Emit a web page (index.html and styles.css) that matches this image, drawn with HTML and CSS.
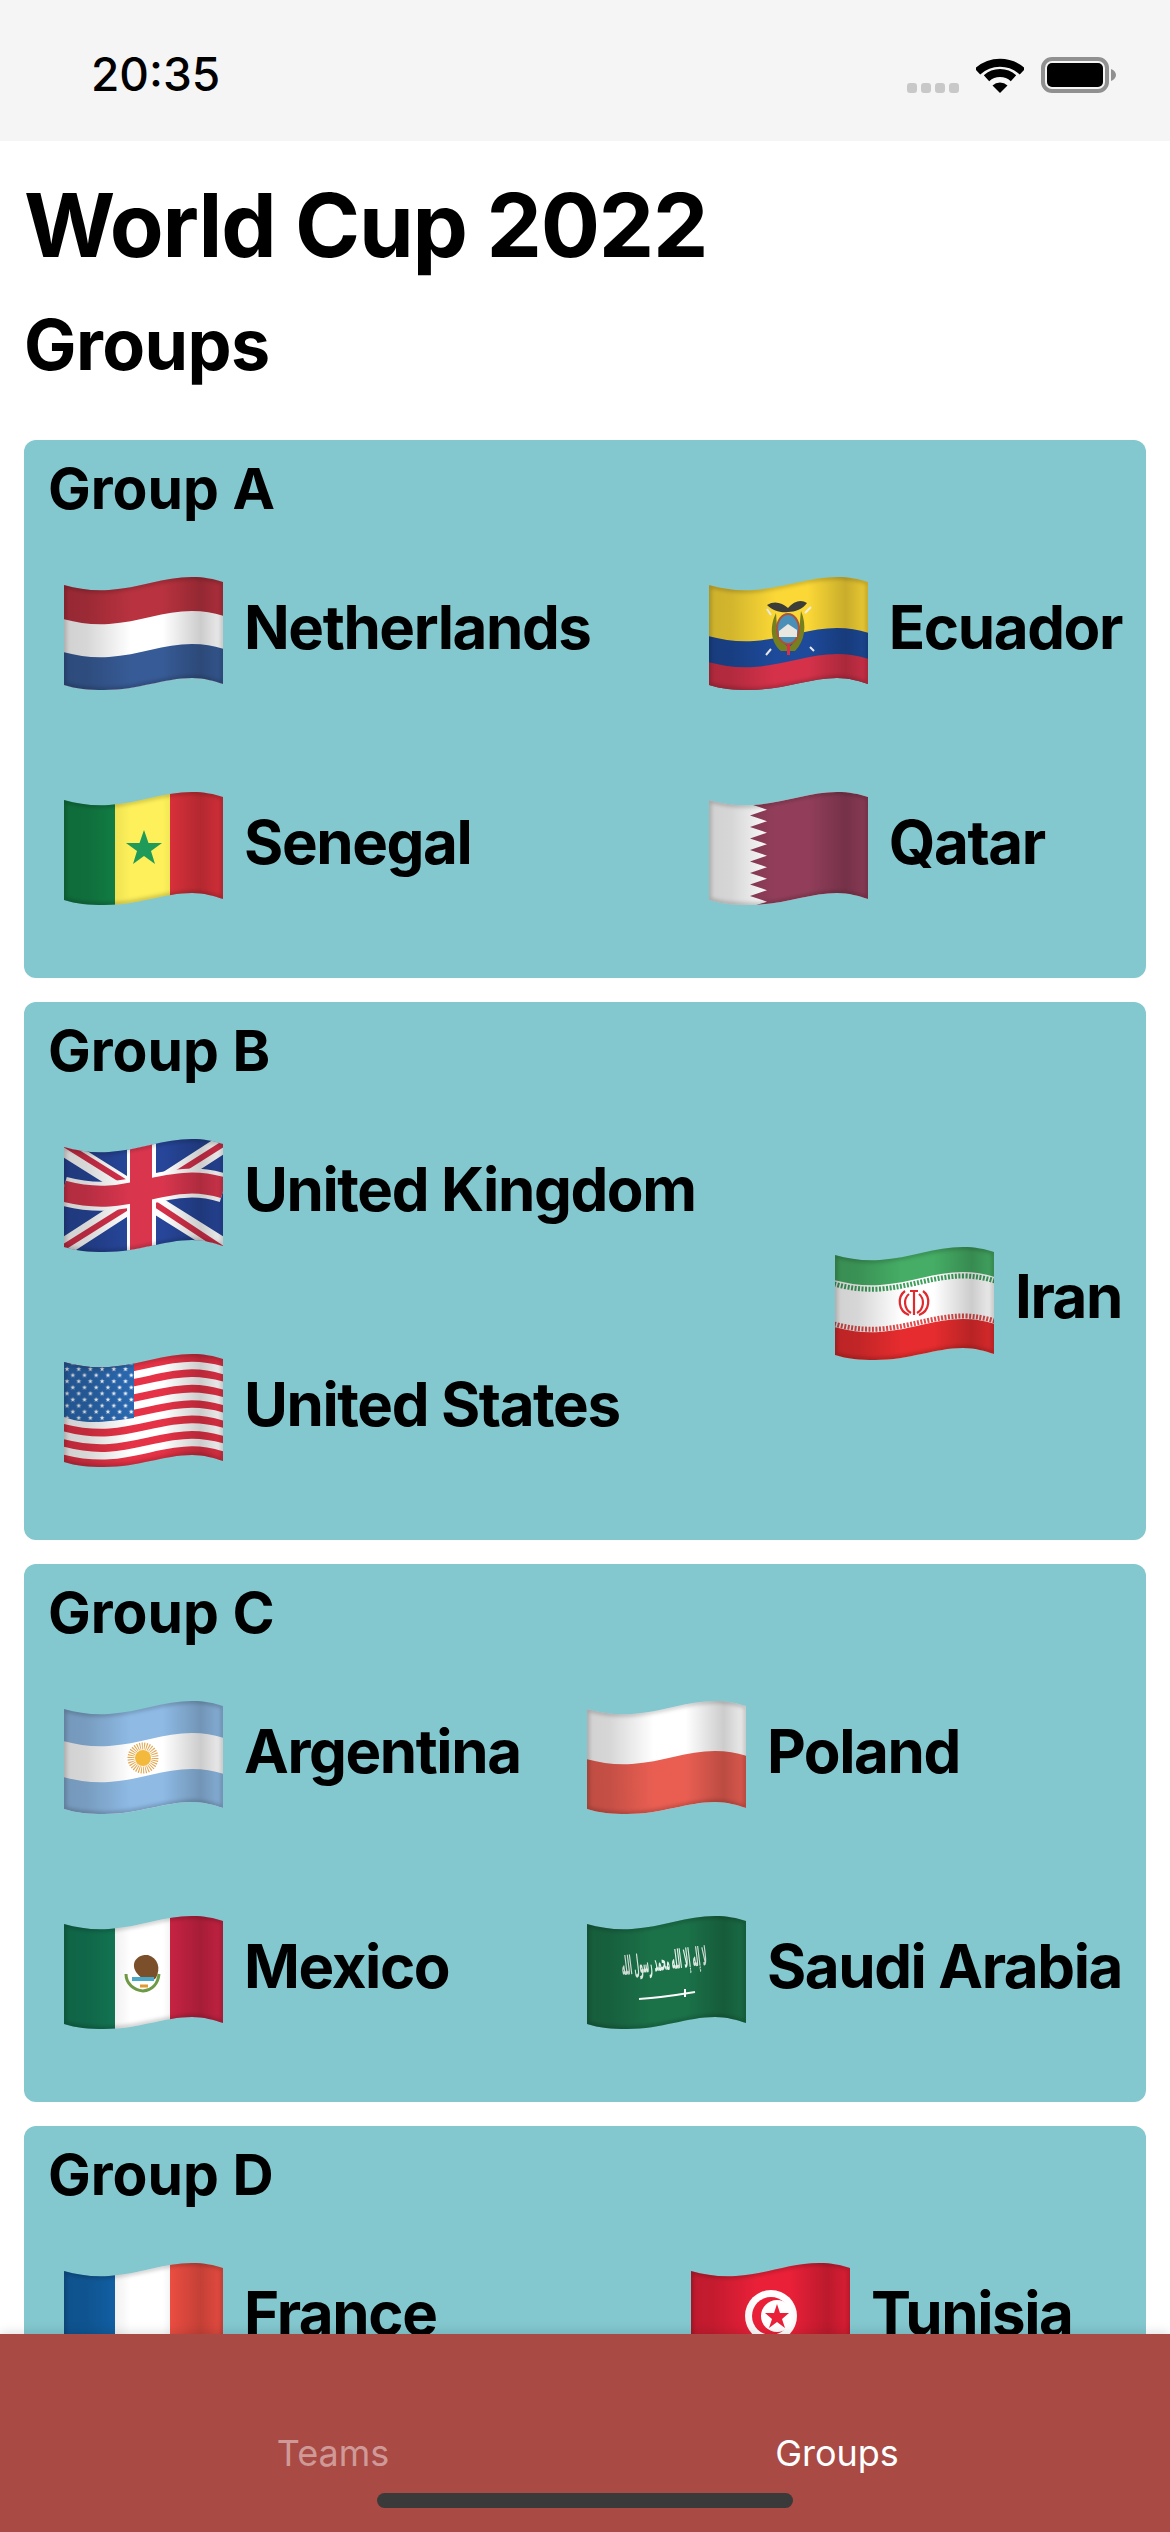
FILE: index.html
```html
<!DOCTYPE html>
<html lang="en">
  <head>
    <meta charset="UTF-8" />
    <meta name="viewport" content="width=device-width, initial-scale=1" />
    <title>World Cup 2022 - Groups</title>
    <link rel="stylesheet" href="styles.css">
  </head>
  <body>
    <!-- Shared flag parts -->
    <svg class="flag-defs" aria-hidden="true">
      <defs>
        <path id="flag-shape" d="M0 8C14 12 28 14 45 13C75 11 100 0 128 0C140 0 150 2 159 5V107C150 104 140 101 128 101C100 101 75 113 40 113C25 113 12 112 0 108Z" />
        <path id="wave" d="M-1 8C14 12 28 14 45 13C75 11 100 0 128 0C140 0 150 2 160 5V220H-1Z" />
        <path id="wave-line" fill="none" d="M-1 8C14 12 28 14 45 13C75 11 100 0 128 0C140 0 150 2 160 5" />
        <clipPath id="flag-clip"><use href="#flag-shape" /></clipPath>
        <linearGradient id="flag-light">
          <stop offset="0" stop-color="#000" stop-opacity=".18" />
          <stop offset=".14" stop-color="#000" stop-opacity=".16" />
          <stop offset=".42" stop-color="#000" stop-opacity="0" />
          <stop offset=".62" stop-color="#000" stop-opacity="0" />
          <stop offset=".86" stop-color="#000" stop-opacity=".2" />
          <stop offset="1" stop-color="#000" stop-opacity=".06" />
        </linearGradient>
        <filter id="flag-blur"><feGaussianBlur stdDeviation="2" /></filter>
        <g id="flag-shade">
          <rect width="159" height="113" fill="url(#flag-light)" />
          <use href="#flag-shape" fill="none" stroke="#000" stroke-opacity=".26" stroke-width="3.500" filter="url(#flag-blur)" />
        </g>
        <polygon id="star" points="0,-2.6 .7,-.8 2.5,-.8 1,.3 1.6,2.1 0,1 -1.6,2.1 -1,.3 -2.5,-.8 -.7,-.8" fill="#fff" />
        <pattern id="us-stars" width="11.7" height="12.2" patternUnits="userSpaceOnUse">
          <use href="#star" x="3" y="3" />
          <use href="#star" x="8.8" y="9.1" />
        </pattern>
      </defs>
    </svg>

    <div class="app">
      <header class="status-bar">
        <span class="time">20:35</span>
        <div class="status-icons">
          <div class="signal"><i></i><i></i><i></i><i></i></div>
          <svg class="wifi" viewBox="0 0 48 37">
            <path d="M1.5 15.5A33 33 0 0 1 46.5 15.5" fill="none" stroke="#000" stroke-width="8" />
            <path d="M10.5 22.2A20 20 0 0 1 37.5 22.2" fill="none" stroke="#000" stroke-width="8" />
            <path d="M24 37L16.5 29.5A11 11 0 0 1 31.5 29.5Z" />
          </svg>
          <svg class="battery" viewBox="0 0 75 36">
            <rect x="2" y="2" width="64" height="32" rx="9" fill="none" stroke="#909090" stroke-width="4" />
            <rect x="6" y="6" width="56" height="24" rx="5" />
            <path d="M70 12C73 13 75 15.500 75 18C75 20.500 73 23 70 24Z" fill="#909090" />
          </svg>
        </div>
      </header>

      <main class="content">
        <h1 class="title">World Cup 2022</h1>
        <h2 class="subtitle">Groups</h2>

        <section class="group">
          <h3 class="group-name">Group A</h3>
          <div class="teams">
            <div class="team-col">
              <div class="team">
                <svg class="flag" viewBox="0 0 159 113"><g clip-path="url(#flag-clip)">
                  <rect width="159" height="113" fill="#b8323f" />
                  <use href="#wave" y="34" fill="#fff" />
                  <use href="#wave" y="67" fill="#375b96" />
                  <use href="#flag-shade" />
                </g></svg>
                <span class="team-name">Netherlands</span>
              </div>
              <div class="team">
                <svg class="flag" viewBox="0 0 159 113"><g clip-path="url(#flag-clip)">
                  <rect width="51" height="113" fill="#128347" />
                  <rect x="51" width="55" height="113" fill="#fdf05a" />
                  <rect x="106" width="53" height="113" fill="#e0323c" />
                  <polygon points="80,38 84.500,51 98,51 87,59 91,72 80,64 69,72 73,59 62,51 75.500,51" fill="#1f9a58" />
                  <use href="#flag-shade" />
                </g></svg>
                <span class="team-name">Senegal</span>
              </div>
            </div>
            <div class="team-col">
              <div class="team">
                <svg class="flag" viewBox="0 0 159 113"><g clip-path="url(#flag-clip)">
                  <rect width="159" height="113" fill="#fbd836" />
                  <use href="#wave" y="51" fill="#1d4a9a" />
                  <use href="#wave" y="77" fill="#d5324a" />
                  <path d="M58 28C66 23 73 26 79 31C85 24 92 22 98 26C94 32 86 35 79 35C72 36 64 34 58 28Z" fill="#3c3c38" />
                  <path d="M62 38L58 32M96 36L102 30M57 78L62 72M101 70L105 74" stroke="#eee" stroke-width="2" />
                  <path d="M67 36C60 50 62 66 72 74H86C96 64 98 48 92 34C90 50 92 62 80 70C68 64 68 50 67 36Z" fill="#76801e" />
                  <ellipse cx="79" cy="52" rx="11" ry="15" fill="#4a8fb8" stroke="#a8553c" stroke-width="2" />
                  <path d="M70 54L79 47L88 53V60H70Z" fill="#e8e8e0" />
                  <path d="M78 67H81V78H78Z" fill="#d5324a" />
                  <use href="#flag-shade" />
                </g></svg>
                <span class="team-name">Ecuador</span>
              </div>
              <div class="team">
                <svg class="flag" viewBox="0 0 159 113"><g clip-path="url(#flag-clip)">
                  <rect width="159" height="113" fill="#fff" />
                  <polygon points="159,0 41,0 41,12 58,17.700 41,23.500 58,29.200 41,35 58,40.700 41,46.500 58,52.200 41,58 58,63.700 41,69.500 58,75.200 41,81 58,86.700 41,92.500 58,98.200 41,104 58,109.700 41,115 159,115" fill="#923e5a" />
                  <use href="#flag-shade" />
                </g></svg>
                <span class="team-name">Qatar</span>
              </div>
            </div>
          </div>
        </section>

        <section class="group">
          <h3 class="group-name">Group B</h3>
          <div class="teams">
            <div class="team-col">
              <div class="team">
                <svg class="flag" viewBox="0 0 159 113"><g clip-path="url(#flag-clip)">
                  <rect width="159" height="113" fill="#27469a" />
                  <path d="M0 8L159 108M0 108L159 5" stroke="#fff" stroke-width="18" />
                  <path d="M0 5L72 50M159 110L88 63M0 108L70 64M159 5L88 50" stroke="#d5304a" stroke-width="6" />
                  <rect x="63" width="29" height="113" fill="#fff" />
                  <use href="#wave-line" y="44" stroke="#fff" stroke-width="29" />
                  <rect x="66" width="22" height="113" fill="#d9364e" />
                  <use href="#wave-line" y="44" stroke="#d9364e" stroke-width="21" />
                  <use href="#flag-shade" />
                </g></svg>
                <span class="team-name">United Kingdom</span>
              </div>
              <div class="team">
                <svg class="flag" viewBox="0 0 159 113"><g clip-path="url(#flag-clip)">
                  <rect width="159" height="113" fill="#e63246" />
                  <use href="#wave-line" y="11.500" stroke="#fff" stroke-width="7.700" />
                  <use href="#wave-line" y="26.900" stroke="#fff" stroke-width="7.700" />
                  <use href="#wave-line" y="42.300" stroke="#fff" stroke-width="7.700" />
                  <use href="#wave-line" y="57.700" stroke="#fff" stroke-width="7.700" />
                  <use href="#wave-line" y="73.100" stroke="#fff" stroke-width="7.700" />
                  <use href="#wave-line" y="88.500" stroke="#fff" stroke-width="7.700" />
                  <path d="M0 0H70V64C55 66 40 68 30 68C18 68 8 66 0 63Z" fill="#2a68b0" />
                  <path d="M0 0H70V64C55 66 40 68 30 68C18 68 8 66 0 63Z" fill="url(#us-stars)" />
                  <use href="#flag-shade" />
                </g></svg>
                <span class="team-name">United States</span>
              </div>
            </div>
            <div class="team-col">
              <div class="team">
                <svg class="flag" viewBox="0 0 159 113"><g clip-path="url(#flag-clip)">
                  <rect width="159" height="113" fill="#45ad65" />
                  <use href="#wave" y="25" fill="#fff" />
                  <use href="#wave" y="72" fill="#e62c2e" />
                  <use href="#wave-line" y="29" stroke="#3d9f5c" stroke-width="5" stroke-dasharray="2 1.500" />
                  <use href="#wave-line" y="69" stroke="#e04a4a" stroke-width="5" stroke-dasharray="2 1.500" />
                  <g fill="none" stroke="#e02a2e" stroke-width="2.200">
                    <path d="M79 43V68M75 44H83" />
                    <path d="M74 47C68 52 69 62 76 66" />
                    <path d="M84 47C90 52 89 62 82 66" />
                    <path d="M70 44C62 50 63 64 74 68" />
                    <path d="M88 44C96 50 95 64 84 68" />
                  </g>
                  <use href="#flag-shade" />
                </g></svg>
                <span class="team-name">Iran</span>
              </div>
            </div>
          </div>
        </section>

        <section class="group">
          <h3 class="group-name">Group C</h3>
          <div class="teams">
            <div class="team-col">
              <div class="team">
                <svg class="flag" viewBox="0 0 159 113"><g clip-path="url(#flag-clip)">
                  <rect width="159" height="113" fill="#8ebae4" />
                  <use href="#wave" y="32" fill="#fff" />
                  <use href="#wave" y="68" fill="#8ebae4" />
                  <circle cx="79" cy="57" r="12" fill="none" stroke="#e4a750" stroke-width="7" stroke-dasharray="1 1.200" />
                  <circle cx="79" cy="57" r="8" fill="#f2b93c" />
                  <use href="#flag-shade" />
                </g></svg>
                <span class="team-name">Argentina</span>
              </div>
              <div class="team">
                <svg class="flag" viewBox="0 0 159 113"><g clip-path="url(#flag-clip)">
                  <rect width="51" height="113" fill="#137a56" />
                  <rect x="51" width="55" height="113" fill="#fff" />
                  <rect x="106" width="53" height="113" fill="#cf2445" />
                  <path d="M72 56C66 46 74 38 84 39C94 42 97 52 92 62C86 68 78 64 72 56Z" fill="#7a4f2a" />
                  <path d="M62 58C62 68 70 74 79 75C88 74 94 68 95 58" fill="none" stroke="#6f9a45" stroke-width="3" />
                  <path d="M68 63H90" stroke="#4aa8c8" stroke-width="4" />
                  <path d="M76 70H84" stroke="#e09a30" stroke-width="3" />
                  <use href="#flag-shade" />
                </g></svg>
                <span class="team-name">Mexico</span>
              </div>
            </div>
            <div class="team-col">
              <div class="team">
                <svg class="flag" viewBox="0 0 159 113"><g clip-path="url(#flag-clip)">
                  <rect width="159" height="113" fill="#fff" />
                  <use href="#wave" y="50" fill="#ea5e52" />
                  <use href="#flag-shade" />
                </g></svg>
                <span class="team-name">Poland</span>
              </div>
              <div class="team">
                <svg class="flag" viewBox="0 0 159 113"><g clip-path="url(#flag-clip)">
                  <rect width="159" height="113" fill="#1b7249" />
                  <text class="flag-script" text-anchor="middle" transform="translate(78 54) rotate(-7) scale(.46 2)">لا إله إلا الله محمد رسول الله</text>
                  <path d="M52 83C68 82 90 79 108 76" fill="none" stroke="#fff" stroke-width="2" />
                  <path d="M98 73V81" stroke="#fff" stroke-width="2" />
                  <use href="#flag-shade" />
                </g></svg>
                <span class="team-name">Saudi Arabia</span>
              </div>
            </div>
          </div>
        </section>

        <section class="group">
          <h3 class="group-name">Group D</h3>
          <div class="teams">
            <div class="team-col team-col-top">
              <div class="team">
                <svg class="flag" viewBox="0 0 159 113"><g clip-path="url(#flag-clip)">
                  <rect width="51" height="113" fill="#1264ac" />
                  <rect x="51" width="55" height="113" fill="#fff" />
                  <rect x="106" width="53" height="113" fill="#f55044" />
                  <use href="#flag-shade" />
                </g></svg>
                <span class="team-name">France</span>
              </div>
            </div>
            <div class="team-col team-col-top team-col-wide">
              <div class="team">
                <svg class="flag" viewBox="0 0 159 113"><g clip-path="url(#flag-clip)">
                  <rect width="159" height="113" fill="#ea2038" />
                  <circle cx="80" cy="53" r="26" fill="#fff" />
                  <circle cx="80" cy="53" r="19" fill="#ea2038" />
                  <circle cx="86" cy="53" r="16" fill="#fff" />
                  <polygon points="86,41 89,50 98,50 91,56 94,65 86,59 78,65 81,56 74,50 83,50" fill="#ea2038" />
                  <use href="#flag-shade" />
                </g></svg>
                <span class="team-name">Tunisia</span>
              </div>
            </div>
          </div>
        </section>
      </main>

      <nav class="tab-bar">
        <div class="tabs">
          <span class="tab">Teams</span>
          <span class="tab tab-active">Groups</span>
        </div>
        <div class="home-indicator"></div>
      </nav>
    </div>
  </body>
</html>
```

FILE: styles.css
```css
/* General page */
body {
  margin: 0;
  font-family: "Inter", "Liberation Sans", sans-serif;
  background: #fff;
  color: #000;
}

.flag-defs {
  display: block;
  width: 0;
  height: 0;
}

.app {
  display: flex;
  flex-direction: column;
  height: 2532px;
  overflow: hidden;
}

/* Status bar */
.status-bar {
  flex: none;
  height: 141px;
  box-sizing: border-box;
  padding: 7px 54px 0 91px;
  background: #f5f5f5;
  display: flex;
  justify-content: space-between;
  align-items: center;
}

.time {
  font-size: 46px;
  font-weight: 500;
}

.status-icons {
  display: flex;
  align-items: flex-end;
  gap: 17px;
}

.signal {
  display: flex;
  gap: 4px;
}

.signal i {
  width: 10px;
  height: 10px;
  border-radius: 3px;
  background: #c8c8c8;
}

.wifi {
  width: 48px;
  height: 37px;
  display: block;
}

.battery {
  width: 75px;
  height: 36px;
  display: block;
}

/* Content */
.content {
  flex: 1;
  min-height: 0;
  overflow: hidden;
  padding: 29px 24px 0;
}

.title {
  margin: 0 0 25px;
  font-size: 88px;
  font-weight: 700;
  line-height: 110px;
  letter-spacing: -1.2px;
}

.subtitle {
  margin: 0 0 55px;
  font-size: 70px;
  font-weight: 700;
  line-height: 80px;
  letter-spacing: -0.6px;
}

.group {
  height: 538px;
  box-sizing: border-box;
  margin-bottom: 24px;
  padding: 12px 24px 22px;
  border-radius: 12px;
  background: #83c7cf;
}

.group-name {
  margin: 0;
  font-size: 57px;
  font-weight: 700;
  line-height: 74px;
}

.teams {
  display: flex;
  justify-content: space-between;
}

.team-col {
  display: flex;
  flex-direction: column;
  justify-content: center;
  min-height: 430px;
}

.team-col-top {
  justify-content: flex-start;
}

.team-col-wide {
  width: 447px;
}

.team {
  height: 215px;
  display: flex;
  align-items: center;
  gap: 21px;
  margin-left: 16px;
}

.flag {
  flex: none;
  width: 159px;
  height: 113px;
  filter: blur(0.4px);
}

.flag-script {
  font-family: "DejaVu Sans", sans-serif;
  font-size: 13px;
  font-weight: 700;
  fill: #e8f2ec;
}

.team-name {
  margin-bottom: 14px;
  font-size: 60px;
  font-weight: 700;
  letter-spacing: -1.4px;
  white-space: nowrap;
}

/* Bottom tabs */
.tab-bar {
  flex: none;
  height: 198px;
  background: #a94a45;
  box-shadow: 0 -2px 10px rgba(0, 0, 0, 0.12);
  display: flex;
  flex-direction: column;
  align-items: center;
  z-index: 1;
}

.tabs {
  align-self: stretch;
  display: flex;
  padding: 95px 81px 0;
}

.tab {
  flex: 1;
  text-align: center;
  font-size: 36px;
  line-height: 48px;
  color: rgba(255, 255, 255, 0.45);
}

.tab-active {
  color: #fff;
}

.home-indicator {
  width: 416px;
  height: 15px;
  margin-top: 16px;
  border-radius: 8px;
  background: #3a3a3a;
}
```
